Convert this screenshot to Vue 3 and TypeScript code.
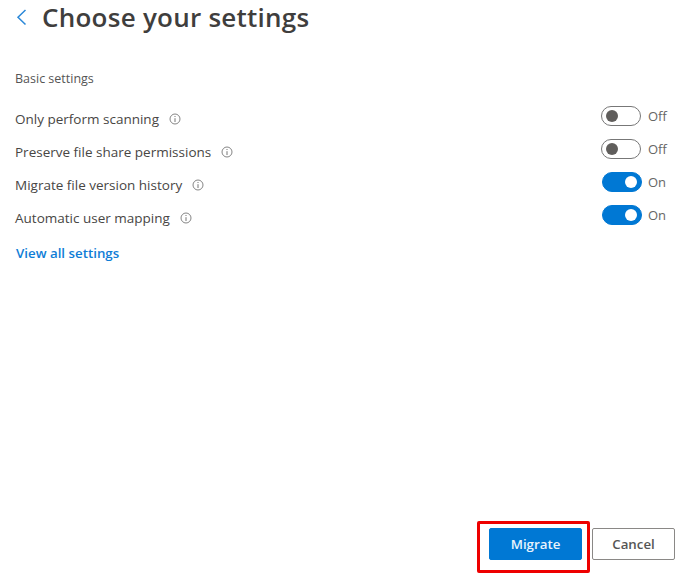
<script setup lang="ts">
interface Setting { label: string; on: boolean }
const settings: Setting[] = [
  { label: 'Only perform scanning', on: false },
  { label: 'Preserve file share permissions', on: false },
  { label: 'Migrate file version history', on: true },
  { label: 'Automatic user mapping', on: true },
]
</script>

<template>
  <main class="page">
    <header class="head">
      <svg class="back" width="11" height="18" viewBox="0 0 11 18" fill="none">
        <path d="M9.5 2 L2 9.2 L9.5 16.5" stroke="#2b88d8" stroke-width="1.5" />
      </svg>
      <h1>Choose your settings</h1>
    </header>
    <p class="section">Basic settings</p>
    <ul class="list">
      <li v-for="s in settings" :key="s.label" class="row">
        <span class="label">{{ s.label }}</span>
        <svg class="info" width="12" height="12" viewBox="0 0 12 12" fill="none">
          <circle cx="6" cy="6" r="5" stroke="#777" stroke-width="0.9" />
          <path d="M6 5.2V9" stroke="#777" />
          <path d="M6 3V4" stroke="#777" />
        </svg>
        <span class="toggle-wrap">
          <span class="toggle" :class="{ on: s.on }"><span class="knob"></span></span>
          <span class="state">{{ s.on ? 'On' : 'Off' }}</span>
        </span>
      </li>
    </ul>
    <a class="link">View all settings</a>
    <footer class="foot">
      <div class="highlight"><button class="btn primary">Migrate</button></div>
      <button class="btn">Cancel</button>
    </footer>
  </main>
</template>

<style>
body { background: #fff; }
</style>

<style scoped>
.page {
  height: 580px;
  box-sizing: border-box;
  padding: 0 24px 7px 15px;
  display: flex;
  flex-direction: column;
  font-family: "Open Sans", "Noto Sans", sans-serif;
  color: #3b3a39;
}
.head { display: flex; align-items: center; height: 34px; padding-left: 1px; }
.back { margin-right: 15px; }
h1 { margin: 0; font-size: 26px; font-weight: 600; color: #3f3e3d; line-height: 34px; letter-spacing: 0.25px; }
.section { margin: 35px 0 0; font-size: 12.5px; line-height: 20px; color: #555; }
.list { list-style: none; margin: 13px 0 0; padding: 0; }
.row { display: flex; align-items: center; height: 33px; font-size: 13.5px; font-weight: 500; color: #484644; }
.info { margin-left: 10px; }
.toggle-wrap { margin-left: auto; display: flex; align-items: center; margin-right: 7px; margin-bottom: 5px; }
.toggle {
  width: 40px; height: 20px; box-sizing: border-box; border: 1px solid #777; border-radius: 10px;
  display: flex; align-items: center; padding: 0 4px; background: #fff;
}
.toggle.on { background: #0078d4; border-color: #0078d4; justify-content: flex-end; transform: translateX(1px); }
.knob { width: 12px; height: 12px; border-radius: 50%; background: #605e5c; }
.on .knob { background: #fff; }
.state { width: 20px; margin-left: 7px; font-size: 13px; font-weight: 400; color: #666; }
.link { margin: 9px 0 0 1px; font-size: 13.3px; font-weight: 600; line-height: 20px; color: #0f7dd6; }
.foot { margin-top: auto; display: flex; align-items: flex-start; justify-content: flex-end; }
.highlight {
  border: 3px solid #ee0000; border-radius: 2px; padding: 4px 5px 10px 9px; margin-right: 2px; box-sizing: border-box; display: flex;
}
.btn {
  width: 83px; height: 32px; margin-top: 7px; box-sizing: border-box; border: 1px solid #8a8886; border-radius: 2px; background: #fff;
  font: 600 13.3px "Open Sans", "Noto Sans", sans-serif; color: #555; padding: 0;
}
.primary { width: 93px; margin-top: 0; background: #0078d4; border-color: #0078d4; color: #e8f3fc; }
</style>
